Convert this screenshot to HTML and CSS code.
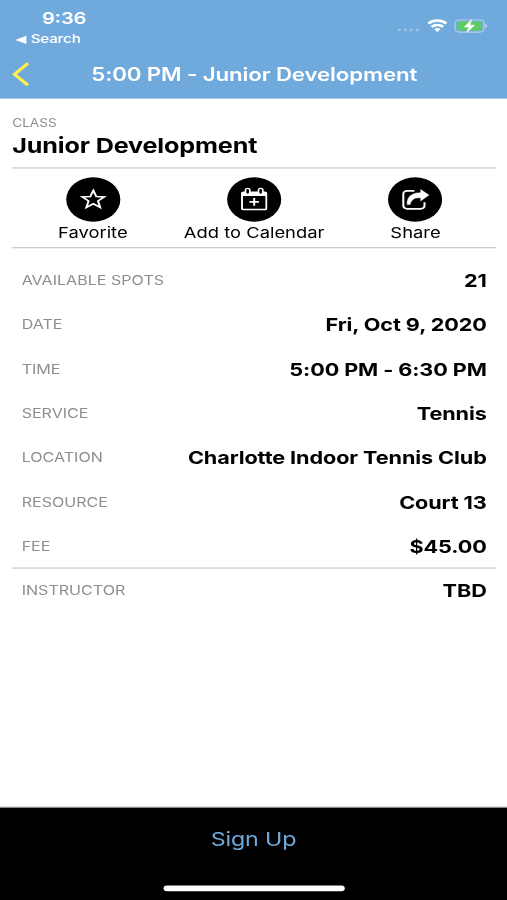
FILE: index.html
```html
<!DOCTYPE html>
<html lang="en">
<head>
    <meta charset="UTF-8">
    <meta name="viewport" content="width=device-width, initial-scale=1.0">
    <title>Junior Development</title>
    <link rel="stylesheet" href="styles.css">
</head>
<body>

    <div class="screen">
        <header class="header">
            <div class="status-bar">
                <div class="status-left">
                    <span class="clock">9:36</span>
                    <span class="back-app">
                        <svg width="9" height="8" viewBox="0 0 9 8"><path d="M8.5 0.3v7.4L0.3 4z" fill="#fff"/></svg>
                        <span class="back-app-name">Search</span>
                    </span>
                </div>
                <div class="status-right">
                    <svg class="signal" width="18" height="4" viewBox="0 0 18 4" fill="#fff" opacity="0.3">
                        <circle cx="2.4" cy="2" r="1.2"/><circle cx="6.8" cy="2" r="1.2"/><circle cx="11.2" cy="2" r="1.2"/><circle cx="15.6" cy="2" r="1.2"/>
                    </svg>
                    <svg class="wifi" width="15" height="12" viewBox="0 0 15 12" fill="none" stroke="#fff" stroke-width="2.3">
                        <path d="M0.8 4.2a9.6 9.6 0 0 1 13.4 0"/>
                        <path d="M3.2 7.2a6.2 6.2 0 0 1 8.6 0"/>
                        <path d="M5.2 9.4a3.4 3.4 0 0 1 4.6 0L7.5 11.9z" fill="#fff" stroke="none"/>
                    </svg>
                    <svg class="battery" width="25" height="13" viewBox="0 0 25 13">
                        <rect x="0.5" y="1" width="21.5" height="11" rx="3" fill="none" stroke="#fff" stroke-opacity="0.45"/>
                        <rect x="2" y="2.5" width="18.5" height="8" rx="1.6" fill="#5fcb65"/>
                        <path d="M23 4.6v3.8c1.8-.6 1.8-3.2 0-3.8z" fill="#fff" opacity="0.5"/>
                        <path d="M12.8 0.8 7.4 7.3h3.4L9.2 12.4 15 5.7h-3.5z" fill="#fff" stroke="#fff" stroke-width="0.5"/>
                    </svg>
                </div>
            </div>
            <div class="nav-bar">
                <svg class="back" width="13" height="22" viewBox="0 0 13 22"><path d="M11.7 1 1.7 11l10 10" fill="none" stroke="#fdf04e" stroke-width="2.6"/></svg>
                <h1 class="nav-title">5:00 PM - Junior Development</h1>
            </div>
        </header>

        <main class="content">
            <div class="class-title">
                <div class="caption">CLASS</div>
                <h2 class="class-name">Junior Development</h2>
            </div>

            <!-- Actions -->
            <div class="actions">
                <div class="action">
                    <span class="circle">
                        <svg width="20" height="20" viewBox="0 0 20 20"><path d="M10 1.8l2.2 5.5 5.9.3-4.6 3.7 1.6 5.8-5.1-3.3-5.1 3.3 1.6-5.8L1.9 7.6l5.9-.3z" fill="none" stroke="#fff" stroke-width="1.5"/></svg>
                    </span>
                    <span class="action-label">Favorite</span>
                </div>
                <div class="action">
                    <span class="circle">
                        <svg width="20" height="22" viewBox="0 0 20 22" fill="none" stroke="#fff">
                            <rect x="1" y="4.5" width="18" height="15.5" rx="1" stroke-width="1.4"/>
                            <path d="M1 4.5h18v3.3H1z" fill="#fff" stroke="none"/>
                            <rect x="3.6" y="0.9" width="3.2" height="5.4" rx="1.6" fill="#000" stroke-width="1.2"/>
                            <rect x="13.2" y="0.9" width="3.2" height="5.4" rx="1.6" fill="#000" stroke-width="1.2"/>
                            <path d="M10 9.7v7M6.5 13.2h7" stroke-width="1.5"/>
                        </svg>
                    </span>
                    <span class="action-label">Add to Calendar</span>
                </div>
                <div class="action">
                    <span class="circle">
                        <svg width="21" height="20" viewBox="0 0 21 20">
                            <path d="M9.5 2.2H4a2.7 2.7 0 0 0-2.7 2.7v10.8A2.7 2.7 0 0 0 4 18.4h10.3a2.7 2.7 0 0 0 2.7-2.7V12.4" fill="none" stroke="#fff" stroke-width="1.5"/>
                            <path d="M13.8 0.3 20.8 6l-7 6.1V8.8C9.8 8.6 7.4 10 6.6 14.9H3.9C3.2 8.2 6.8 3.7 13.8 3.5z" fill="#fff" stroke="#000" stroke-width="0.4"/>
                        </svg>
                    </span>
                    <span class="action-label">Share</span>
                </div>
            </div>

            <!-- Class details -->
            <div class="details">
                <div class="row"><span class="label">AVAILABLE SPOTS</span><span class="value">21</span></div>
                <div class="row"><span class="label">DATE</span><span class="value">Fri, Oct 9, 2020</span></div>
                <div class="row"><span class="label">TIME</span><span class="value">5:00 PM - 6:30 PM</span></div>
                <div class="row"><span class="label">SERVICE</span><span class="value">Tennis</span></div>
                <div class="row"><span class="label">LOCATION</span><span class="value">Charlotte Indoor Tennis Club</span></div>
                <div class="row"><span class="label">RESOURCE</span><span class="value">Court 13</span></div>
                <div class="row"><span class="label">FEE</span><span class="value">$45.00</span></div>
                <div class="row instructor"><span class="label">INSTRUCTOR</span><span class="value">TBD</span></div>
            </div>
        </main>

        <footer class="footer">
            <a class="sign-up">Sign Up</a>
            <div class="home-indicator"></div>
        </footer>
    </div>

</body>
</html>
```
FILE: styles.css
```css
* {
    box-sizing: border-box;
}

body {
    margin: 0;
    width: 507px;
    height: 900px;
    overflow: hidden;
    font-family: Inter, "Liberation Sans", sans-serif;
    background-color: #fff;
}

/* 375x812 phone layout stretched to the window */
.screen {
    display: flex;
    flex-direction: column;
    width: 375px;
    height: 812px;
    transform: scale(1.352, 1.1084);
    transform-origin: 0 0;
    white-space: nowrap;
    line-height: 1;
}

svg {
    display: block;
    flex: none;
}

h1, h2 {
    margin: 0;
}

.header {
    height: 88.5px;
    background-color: #70aadd;
    color: #fff;
}

.status-bar {
    display: flex;
    justify-content: space-between;
    height: 45px;
    padding: 9.5px 14px 0 11px;
}

.status-left {
    display: flex;
    flex-direction: column;
}

.clock {
    padding-left: 20px;
    font-size: 14.7px;
    font-weight: 600;
}

.back-app {
    display: flex;
    align-items: center;
    gap: 2.7px;
    margin-top: 6px;
}

.back-app-name {
    font-size: 11px;
    font-weight: 500;
}

.status-right {
    display: flex;
    align-items: flex-start;
    padding-top: 7.5px;
}

.signal {
    margin: 8px 5px 0 0;
}

.wifi {
    margin-right: 5px;
}

.nav-bar {
    display: flex;
    align-items: center;
    height: 44px;
    padding-left: 9px;
}

.nav-title {
    margin-left: 45.5px;
    font-size: 16.5px;
    font-weight: 600;
    letter-spacing: -0.1px;
}

.content {
    flex: 1;
    padding: 0 8px 0 9px;
}

.class-title {
    height: 63px;
    padding-top: 17.5px;
    border-bottom: 1.5px solid #c3c3c3;
}

.caption {
    font-size: 10.1px;
    color: #8e8e8e;
}

.class-name {
    margin-top: 6px;
    font-size: 18.6px;
    font-weight: 700;
    letter-spacing: -0.1px;
}

.actions {
    display: grid;
    grid-template-columns: repeat(3, 1fr);
    height: 72.5px;
    padding-top: 8px;
    border-bottom: 1.5px solid #c3c3c3;
}

.action {
    display: flex;
    flex-direction: column;
    align-items: center;
}

.circle {
    display: flex;
    align-items: center;
    justify-content: center;
    width: 40px;
    height: 40px;
    border-radius: 50%;
    background-color: #000;
}

.action-label {
    margin-top: 4.6px;
    font-size: 13.6px;
}

.details {
    padding-top: 8.3px;
}

.row {
    display: flex;
    align-items: center;
    justify-content: space-between;
    height: 40px;
    padding: 0 7px;
}

.label {
    padding-top: 1px;
    font-size: 11.9px;
    color: #8e8e8e;
}

.value {
    padding-top: 0.6px;
    font-size: 16px;
    font-weight: 700;
    letter-spacing: -0.07px;
}

.instructor {
    border-top: 1.5px solid #c3c3c3;
}

.footer {
    display: flex;
    flex-direction: column;
    align-items: center;
    height: 84px;
    padding-top: 18.5px;
    border-top: 1px solid #888;
    background-color: #000;
}

.sign-up {
    font-size: 17.2px;
    letter-spacing: -0.1px;
    color: #70aadd;
}

.home-indicator {
    width: 134px;
    height: 5px;
    margin-top: 34.3px;
    border-radius: 3px;
    background-color: #fff;
}
```
